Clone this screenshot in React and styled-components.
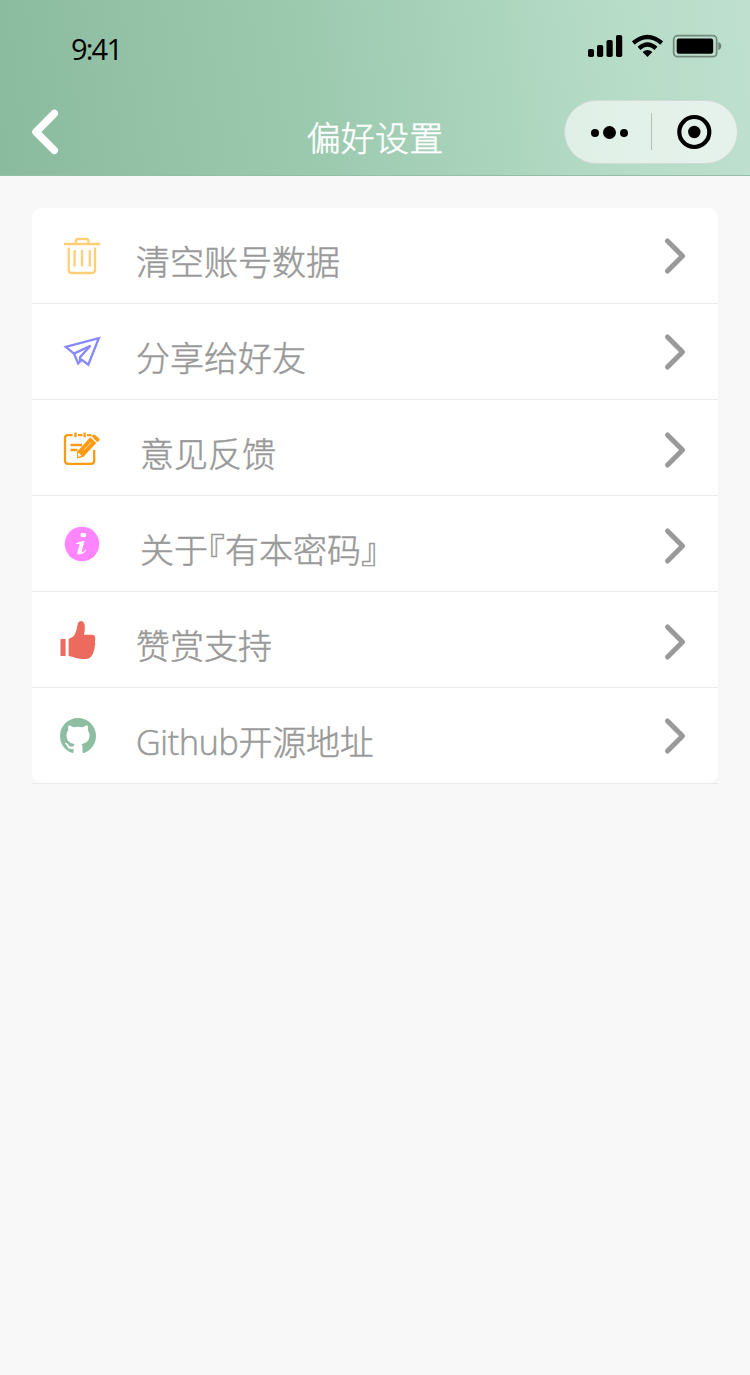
import React from "react";
import styled, { createGlobalStyle } from "styled-components";

const GlobalStyle = createGlobalStyle`
  body {
    margin: 0;
    background-color: #f8f8f8;
    font-family: "Open Sans", "Noto Sans CJK SC", sans-serif;
  }
`;

const TrashIcon = () => (
    <Icon viewBox="0 0 44 44" $color="#ffcf78">
        <path d="M4 10H40M16 9.5V7q0-2 2-2h8.500q2 0 2 2v2.500M8.700 13.500V36q0 3 3 3h20.300q3 0 3-3V13.500M14.600 16v16.500M22 16v16.500M29.800 16v16.500" />
    </Icon>
);

const PlaneIcon = () => (
    <Icon viewBox="0 0 44 44" $color="#8688fb">
        <path d="M5.800 16.800L38.800 8.100L28.300 34.600L21.800 29.800L18.200 33.500L14 23.600Z" />
        <path d="M14 23.600L30.500 15.700L20 27.300V31" />
    </Icon>
);

const NoteIcon = () => (
    <Icon viewBox="0 0 44 44" $color="#ff9a15">
        <path d="M12.500 9.200H8q-3 0-3 3V34.800q0 3 3 3H31.200q3 0 3-3V24M18 9.200h4.500M27 9.200h4.500M15.500 6.500v4.800M24.600 6.500v4.800M10.500 19H22M10.500 24h7" />
        <path className="solid" d="M17.200 25.500L30.300 11.200L36.300 17L23.300 31L16.800 32.500ZM31.500 10.300L33.200 8.700Q34.200 8 35.200 9L39.200 12.500Q40.300 13.500 39.300 14.500L37.400 16.200Z" />
        <path className="cut" d="M18.600 27.200l2.600 2.500-3 .8zM24 24l7-7.500" />
    </Icon>
);

const InfoIcon = () => (
    <Icon viewBox="0 0 44 44" $color="#ff85ff">
        <circle className="solid" cx="22" cy="22" r="17.300" />
        <ellipse className="hole" cx="23.300" cy="13" rx="2.900" ry="2.300" />
        <path className="hole" d="M16 21.300Q19.500 19.300 24.600 18.800L21.800 29Q21.800 30.300 23.200 29.700Q24.600 29 25.700 27.500L26.200 28.300Q23.500 32.300 19.300 32.500Q16.800 32.300 17.300 30L19.600 22.600Q19.700 21.600 18.600 21.800L16 22.300Z" />
    </Icon>
);

const ThumbIcon = () => (
    <Icon viewBox="0 0 44 44" $color="#ec6a5e">
        <path className="solid" d="M.5 21H5.600V38H.5ZM8.600 21Q13 19.500 14.500 17Q17 12 17.600 6.500Q18.200 3 21 3Q24.800 3.500 24.800 8.500Q25 13 23.900 16.700H31.500Q35.300 16.800 35.300 20Q35.300 22 34.900 23.500Q35.600 26 34.700 28.500Q34.800 31 33.700 33Q33.400 35.700 32.200 37Q30.500 40.500 26 41Q18 41 13 39L8.600 38Z" />
    </Icon>
);

const GithubIcon = () => (
    <Icon viewBox="0 0 44 44" $color="#8dbea1">
        <path
            className="solid"
            transform="translate(0 4) scale(2.250)"
            d="M8 0C3.580 0 0 3.580 0 8c0 3.540 2.290 6.530 5.470 7.590.4.070.55-.17.55-.38 0-.19-.01-.82-.01-1.490-2.010.37-2.530-.49-2.690-.94-.09-.23-.48-.94-.82-1.130-.28-.15-.68-.52-.01-.53.63-.01 1.080.58 1.230.82.72 1.210 1.870.87 2.330.66.070-.52.28-.87.51-1.070-1.780-.2-3.640-.89-3.640-3.950 0-.87.31-1.590.82-2.150-.08-.2-.36-1.020.080-2.120 0 0 .67-.21 2.200.82.64-.18 1.320-.27 2-.27.68 0 1.360.090 2 .27 1.530-1.040 2.200-.82 2.200-.82.44 1.100.16 1.920.080 2.120.51.56.82 1.270.82 2.150 0 3.070-1.870 3.750-3.650 3.950.29.25.54.73.54 1.480 0 1.070-.01 1.930-.01 2.200 0 .21.15.46.55.38A8.013 8.013 0 0016 8c0-4.420-3.580-8-8-8z"
        />
    </Icon>
);

const ITEMS = [
    { label: "清空账号数据", icon: TrashIcon },
    { label: "分享给好友", icon: PlaneIcon },
    { label: "意见反馈", icon: NoteIcon, indent: 4, drop: 2 },
    { label: "关于『有本密码』", icon: InfoIcon, indent: 4, drop: 2 },
    { label: "赞赏支持", icon: ThumbIcon, drop: 2 },
    { label: "Github开源地址", icon: GithubIcon, spacing: -0.25 },
];

const StatusIcons = () => (
    <Status viewBox="0 0 134 24">
        <rect x="0" y="15" width="6" height="8" rx="1.800" />
        <rect x="9" y="11" width="6.200" height="12" rx="1.800" />
        <rect x="18.500" y="6" width="6.200" height="17" rx="1.800" />
        <rect x="28" y="1" width="6.200" height="22" rx="1.800" />
        <g fill="none" stroke="#000" strokeWidth="4.300">
            <path d="M45.300 9Q59.500-3 73.700 9" />
            <path d="M51 14.300Q59.500 6.500 68 14.300" />
        </g>
        <path d="M54.600 18Q59.500 14 64.400 18L59.500 23Z" />
        <rect x="85.700" y="1.700" width="43" height="21" rx="4" fill="none" stroke="#000" strokeOpacity=".38" strokeWidth="1.800" />
        <rect x="88.700" y="4.500" width="36.500" height="15.300" rx="2.200" />
        <path d="M130.300 8Q133.300 9 133.300 12T130.300 16Z" fillOpacity=".42" />
    </Status>
);

const App = () => {
    return (
        <Page>
            <GlobalStyle />
            <Header>
                <StatusBar>
                    <Time>9:41</Time>
                    <StatusIcons />
                </StatusBar>
                <NavBar>
                    <BackButton aria-label="返回">
                        <svg width="28" height="46" viewBox="0 0 28 46">
                            <path d="M23.300 4.500L5 23L23.300 41.300" />
                        </svg>
                    </BackButton>
                    <Title>偏好设置</Title>
                    <Capsule>
                        <CapsuleButton aria-label="更多">
                            <svg width="40" height="36" viewBox="0 0 40 36">
                                <circle cx="7" cy="19" r="4" />
                                <circle cx="21.500" cy="18.500" r="6.500" />
                                <circle cx="36" cy="19" r="4" />
                            </svg>
                        </CapsuleButton>
                        <Divider />
                        <CapsuleButton aria-label="关闭">
                            <svg width="36" height="36" viewBox="0 0 36 36">
                                <circle cx="18.300" cy="18" r="15" fill="none" stroke="#000" strokeWidth="4.200" />
                                <circle cx="18.300" cy="18" r="6.200" />
                            </svg>
                        </CapsuleButton>
                    </Capsule>
                </NavBar>
            </Header>
            <List>
                {ITEMS.map(({ label, icon: ItemIcon, indent, drop, spacing }) => (
                    <Row key={label}>
                        <ItemIcon />
                        <Label $indent={indent} $spacing={spacing}>{label}</Label>
                        <Chevron viewBox="0 0 24 38" $drop={drop}>
                            <path d="M4.500 4L19.500 19L4.500 34" />
                        </Chevron>
                    </Row>
                ))}
            </List>
        </Page>
    );
};

const Page = styled.div`
  width: 750px;
  min-height: 1375px;
  background-color: #f8f8f8;
`;

const Header = styled.header`
  height: 176px;
  box-sizing: border-box;
  border-bottom: 1px solid #95bea6;
  background: linear-gradient(83deg, #8bbb9f 0%, #9ccaaf 42%, #b5dbc6 80%, #bfe0cf 100%);
`;

const StatusBar = styled.div`
  height: 88px;
  box-sizing: border-box;
  padding: 34px 28px 0 71px;
  display: flex;
  justify-content: space-between;
  align-items: flex-start;
`;

const Time = styled.span`
  font-size: 29px;
  line-height: 30px;
  letter-spacing: -1.800px;
  color: #000;
`;

const Status = styled.svg`
  width: 134px;
  height: 24px;
`;

const NavBar = styled.nav`
  height: 87px;
  display: grid;
  grid-template-columns: 1fr auto 1fr;
  align-items: center;
`;

const BackButton = styled.button`
  justify-self: start;
  display: flex;
  margin-left: 31px;
  padding: 0;
  border: 0;
  background: none;
  cursor: pointer;
  path {
    fill: none;
    stroke: #fff;
    stroke-width: 7.500;
    stroke-linecap: round;
    stroke-linejoin: round;
  }
`;

const Title = styled.h1`
  margin: 0;
  padding-top: 12px;
  font-size: 34px;
  line-height: 40px;
  font-weight: 300;
  letter-spacing: 0.300px;
  color: #fff;
  -webkit-text-stroke: 0.500px #fff;
`;

const Capsule = styled.div`
  justify-self: end;
  width: 174px;
  height: 64px;
  box-sizing: border-box;
  margin-right: 12px;
  border: 1px solid #d2d8d3;
  border-radius: 32px;
  background-color: rgba(255, 255, 255, 0.6);
  display: flex;
  align-items: center;
`;

const CapsuleButton = styled.button`
  flex: 1;
  display: flex;
  justify-content: center;
  padding: 0;
  border: 0;
  background: none;
  cursor: pointer;
`;

const Divider = styled.span`
  width: 1px;
  height: 37px;
  background-color: #b3bfb8;
`;

const List = styled.ul`
  margin: 32px 32px 0;
  padding: 0;
  list-style: none;
  border-bottom: 1px solid #ebebeb;
`;

const Row = styled.li`
  height: 96px;
  box-sizing: border-box;
  padding: 0 31px 0 28px;
  border-bottom: 1px solid #ebebeb;
  background-color: #fff;
  display: flex;
  align-items: center;
  cursor: pointer;
  &:first-child {
    border-radius: 10px 10px 0 0;
  }
  &:last-child {
    height: 95px;
    border-bottom: 0;
    border-radius: 0 0 10px 10px;
  }
`;

const Icon = styled.svg`
  flex: none;
  width: 44px;
  height: 44px;
  fill: none;
  stroke: ${({ $color }) => $color};
  stroke-width: 2.300;
  .solid {
    fill: ${({ $color }) => $color};
    stroke: none;
  }
  .hole {
    fill: #fff;
    stroke: none;
  }
  .cut {
    fill: #fff;
    stroke: #fff;
    stroke-width: 0.600;
  }
`;

const Label = styled.span`
  flex: 1;
  padding-top: 12px;
  margin-left: ${({ $indent = 0 }) => 32 + $indent}px;
  font-size: 34px;
  line-height: 40px;
  font-weight: 300;
  font-feature-settings: "halt";
  letter-spacing: ${({ $spacing = 0 }) => $spacing}px;
  color: #999;
  -webkit-text-stroke: 0.500px #999;
`;

const Chevron = styled.svg`
  width: 24px;
  height: 38px;
  padding-top: ${({ $drop = 0 }) => $drop * 2}px;
  fill: none;
  stroke: #999;
  stroke-width: 5;
  stroke-linecap: round;
  stroke-linejoin: round;
`;

export default App;
